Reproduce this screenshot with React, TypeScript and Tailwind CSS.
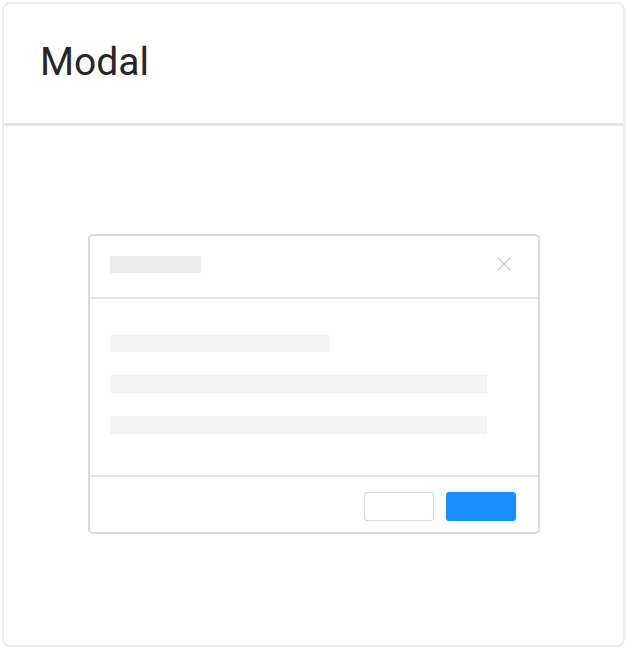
export default function App() {
  return (
    <div className="w-[627px] h-[649px] bg-white p-[2px]" style={{ fontFamily: 'Roboto, "Liberation Sans", sans-serif' }}>
      <div className="flex h-full flex-col rounded-[8px] border-2 border-[#ededed] bg-white">
        <div className="flex h-[119px] items-center pl-[36px] pb-[2px]">
          <h1 className="text-[39px] leading-none text-[#262626]">Modal</h1>
        </div>
        <div className="h-[3px] bg-[#e6e6e6]" />
        <div className="flex flex-1 items-center justify-center pb-[3px]">
          <ModalSketch />
        </div>
      </div>
    </div>
  );
}

function ModalSketch() {
  return (
    <div className="flex h-[300px] w-[452px] flex-col rounded-[5px] border-2 border-[#dadada] bg-white">
      <div className="flex h-[61px] items-start justify-between pl-[20px] pr-[26px] pt-[20px]">
        <div className="h-[17px] w-[91px] bg-[#ebebeb]" />
        <svg width="16" height="16" viewBox="0 0 16 16">
          <path d="M2 2 L14 14 M14 2 L2 14" stroke="#c6c6c6" strokeWidth="1.4" fill="none" />
        </svg>
      </div>
      <div className="h-[2px] bg-[#e4e4e4]" />
      <div className="flex h-[176px] flex-col gap-[23px] pl-[20px] pt-[36px]">
        <div className="h-[17px] w-[220px] bg-[#f3f3f3]" />
        <div className="h-[18px] w-[377px] bg-[#f3f3f3]" />
        <div className="h-[18px] w-[377px] bg-[#f3f3f3]" />
      </div>
      <div className="h-[2px] bg-[#e4e4e4]" />
      <div className="flex flex-1 items-start justify-end gap-[12px] pr-[22px] pt-[15px]">
        <div className="h-[29px] w-[70px] rounded-[3px] border-[1.5px] border-[#d9d9d9] bg-white" />
        <div className="h-[29px] w-[70px] rounded-[3px] bg-[#1890ff]" />
      </div>
    </div>
  );
}
